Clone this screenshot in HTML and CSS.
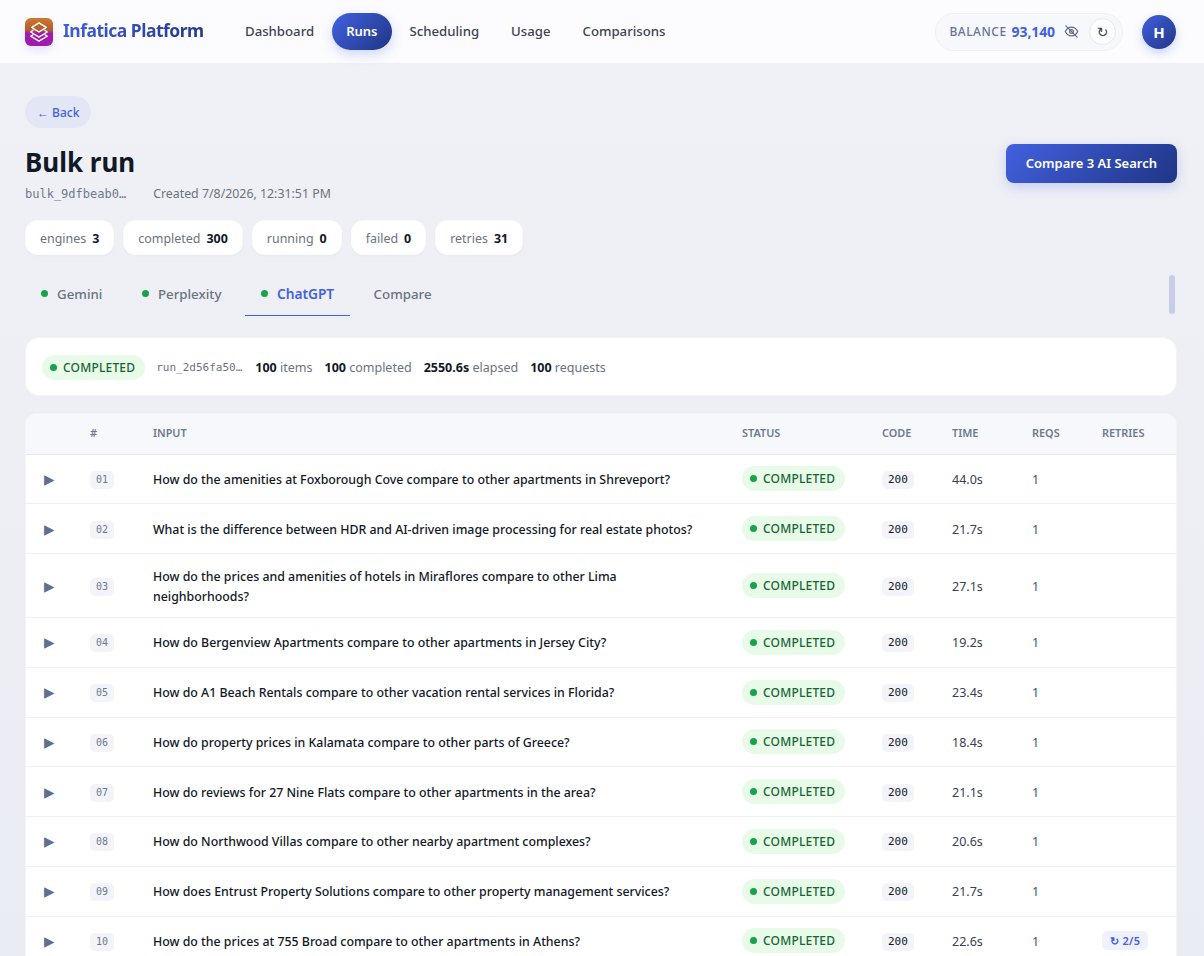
FILE: index.html
```html
<!DOCTYPE html>
<html lang="en">

<head>
    <meta charset="UTF-8">
    <meta name="viewport" content="width=device-width, initial-scale=1.0">
    <title>Infatica Platform - Bulk run</title>
    <link rel="stylesheet" href="styles.css">
</head>

<body>
    <header class="topbar">
        <div class="brand">
            <div class="brand-logo">
                <svg width="22" height="22" viewBox="0 0 24 24" fill="none" stroke="#fff" stroke-width="1.5" stroke-linejoin="round" stroke-linecap="round">
                    <path d="M12 2 20 7 12 12 4 7Z" />
                    <path d="M5.5 10 3 12 12 17.5 21 12 18.5 10" />
                    <path d="M5.5 15 3 16.5 12 22 21 16.5 18.5 15" />
                </svg>
            </div>
            <span class="brand-name">Infatica Platform</span>
        </div>
        <nav class="nav">
            <a class="nav-link">Dashboard</a>
            <a class="nav-link active">Runs</a>
            <a class="nav-link">Scheduling</a>
            <a class="nav-link">Usage</a>
            <a class="nav-link">Comparisons</a>
        </nav>
        <div class="balance">
            <span class="balance-label">BALANCE</span>
            <span class="balance-value">93,140</span>
            <svg class="eye-off" width="15" height="15" viewBox="0 0 24 24" fill="none" stroke="#5f6b85" stroke-width="2" stroke-linecap="round" stroke-linejoin="round">
                <path d="M2 12s3.6-7 10-7 10 7 10 7-3.6 7-10 7-10-7-10-7Z" />
                <circle cx="12" cy="12" r="3" />
                <path d="M3 3l18 18" />
            </svg>
            <button class="refresh">↻</button>
        </div>
        <div class="avatar">H</div>
    </header>

    <main class="page">
        <button class="back">← Back</button>

        <div class="title-row">
            <div>
                <h1>Bulk run</h1>
                <div class="meta">
                    <span class="mono-id">bulk_9dfbeab0…</span>
                    <span>Created 7/8/2026, 12:31:51 PM</span>
                </div>
            </div>
            <button class="compare-btn">Compare 3 AI Search</button>
        </div>

        <div class="stats">
            <div class="stat">engines <b>3</b></div>
            <div class="stat">completed <b>300</b></div>
            <div class="stat">running <b>0</b></div>
            <div class="stat">failed <b>0</b></div>
            <div class="stat">retries <b>31</b></div>
        </div>

        <div class="tabs-row">
            <div class="tabs">
                <div class="tab"><i class="dot"></i>Gemini</div>
                <div class="tab"><i class="dot"></i>Perplexity</div>
                <div class="tab active"><i class="dot"></i>ChatGPT</div>
                <div class="tab">Compare</div>
            </div>
            <div class="tabs-scroll"></div>
        </div>

        <div class="summary">
            <span class="pill"><i class="dot"></i>COMPLETED</span>
            <span class="mono-id run-id">run_2d56fa50…</span>
            <span class="sum-item"><b>100</b> items</span>
            <span class="sum-item"><b>100</b> completed</span>
            <span class="sum-item"><b>2550.6s</b> elapsed</span>
            <span class="sum-item"><b>100</b> requests</span>
        </div>

        <div class="table-card">
            <table>
                <colgroup>
                    <col class="c-exp">
                    <col class="c-num">
                    <col>
                    <col class="c-status">
                    <col class="c-code">
                    <col class="c-time">
                    <col class="c-reqs">
                    <col class="c-retries">
                </colgroup>
                <thead>
                    <tr>
                        <th></th>
                        <th>#</th>
                        <th>INPUT</th>
                        <th>STATUS</th>
                        <th>CODE</th>
                        <th>TIME</th>
                        <th>REQS</th>
                        <th>RETRIES</th>
                    </tr>
                </thead>
                <tbody>
                    <tr>
                        <td class="exp">▶</td>
                        <td><span class="num">01</span></td>
                        <td class="input">How do the amenities at Foxborough Cove compare to other apartments in Shreveport?</td>
                        <td><span class="pill"><i class="dot"></i>COMPLETED</span></td>
                        <td><span class="code">200</span></td>
                        <td class="time">44.0s</td>
                        <td class="reqs">1</td>
                        <td></td>
                    </tr>
                    <tr>
                        <td class="exp">▶</td>
                        <td><span class="num">02</span></td>
                        <td class="input">What is the difference between HDR and AI-driven image processing for real estate photos?</td>
                        <td><span class="pill"><i class="dot"></i>COMPLETED</span></td>
                        <td><span class="code">200</span></td>
                        <td class="time">21.7s</td>
                        <td class="reqs">1</td>
                        <td></td>
                    </tr>
                    <tr>
                        <td class="exp">▶</td>
                        <td><span class="num">03</span></td>
                        <td class="input">How do the prices and amenities of hotels in Miraflores compare to other Lima neighborhoods?</td>
                        <td><span class="pill"><i class="dot"></i>COMPLETED</span></td>
                        <td><span class="code">200</span></td>
                        <td class="time">27.1s</td>
                        <td class="reqs">1</td>
                        <td></td>
                    </tr>
                    <tr>
                        <td class="exp">▶</td>
                        <td><span class="num">04</span></td>
                        <td class="input">How do Bergenview Apartments compare to other apartments in Jersey City?</td>
                        <td><span class="pill"><i class="dot"></i>COMPLETED</span></td>
                        <td><span class="code">200</span></td>
                        <td class="time">19.2s</td>
                        <td class="reqs">1</td>
                        <td></td>
                    </tr>
                    <tr>
                        <td class="exp">▶</td>
                        <td><span class="num">05</span></td>
                        <td class="input">How do A1 Beach Rentals compare to other vacation rental services in Florida?</td>
                        <td><span class="pill"><i class="dot"></i>COMPLETED</span></td>
                        <td><span class="code">200</span></td>
                        <td class="time">23.4s</td>
                        <td class="reqs">1</td>
                        <td></td>
                    </tr>
                    <tr>
                        <td class="exp">▶</td>
                        <td><span class="num">06</span></td>
                        <td class="input">How do property prices in Kalamata compare to other parts of Greece?</td>
                        <td><span class="pill"><i class="dot"></i>COMPLETED</span></td>
                        <td><span class="code">200</span></td>
                        <td class="time">18.4s</td>
                        <td class="reqs">1</td>
                        <td></td>
                    </tr>
                    <tr>
                        <td class="exp">▶</td>
                        <td><span class="num">07</span></td>
                        <td class="input">How do reviews for 27 Nine Flats compare to other apartments in the area?</td>
                        <td><span class="pill"><i class="dot"></i>COMPLETED</span></td>
                        <td><span class="code">200</span></td>
                        <td class="time">21.1s</td>
                        <td class="reqs">1</td>
                        <td></td>
                    </tr>
                    <tr>
                        <td class="exp">▶</td>
                        <td><span class="num">08</span></td>
                        <td class="input">How do Northwood Villas compare to other nearby apartment complexes?</td>
                        <td><span class="pill"><i class="dot"></i>COMPLETED</span></td>
                        <td><span class="code">200</span></td>
                        <td class="time">20.6s</td>
                        <td class="reqs">1</td>
                        <td></td>
                    </tr>
                    <tr>
                        <td class="exp">▶</td>
                        <td><span class="num">09</span></td>
                        <td class="input">How does Entrust Property Solutions compare to other property management services?</td>
                        <td><span class="pill"><i class="dot"></i>COMPLETED</span></td>
                        <td><span class="code">200</span></td>
                        <td class="time">21.7s</td>
                        <td class="reqs">1</td>
                        <td></td>
                    </tr>
                    <tr>
                        <td class="exp">▶</td>
                        <td><span class="num">10</span></td>
                        <td class="input">How do the prices at 755 Broad compare to other apartments in Athens?</td>
                        <td><span class="pill"><i class="dot"></i>COMPLETED</span></td>
                        <td><span class="code">200</span></td>
                        <td class="time">22.6s</td>
                        <td class="reqs">1</td>
                        <td><span class="retry">↻ 2/5</span></td>
                    </tr>
                </tbody>
            </table>
        </div>
    </main>
</body>

</html>
```

FILE: styles.css
```css
* {
    box-sizing: border-box;
}

html,
body {
    height: 956px;
    overflow: hidden;
}

body {
    margin: 0;
    font-family: "Noto Sans", "Open Sans", sans-serif;
    font-size: 13px;
    background: linear-gradient(180deg, #f0f1f6 0%, #eaecf3 100%);
    color: #111827;
}

.topbar {
    display: flex;
    align-items: center;
    height: 63px;
    padding: 0 28px 0 25px;
    background-color: #fcfcff;
}

.brand {
    display: flex;
    align-items: center;
    gap: 10px;
    width: 206px;
}

.brand-logo {
    display: flex;
    align-items: center;
    justify-content: center;
    width: 28px;
    height: 28px;
    border-radius: 6px;
    background: linear-gradient(180deg, #cc7a2a 0%, #ae5a2f 45%, #a01aad 55%, #a01aad 100%);
    box-shadow: 0 4px 10px rgba(67, 90, 220, 0.15);
}

.brand-name {
    padding-bottom: 3px;
    font-size: 17.5px;
    font-weight: 700;
    letter-spacing: -0.5px;
    background: linear-gradient(135deg, #4361e0, #1f3585);
    -webkit-background-clip: text;
    background-clip: text;
    color: transparent;
}

.nav {
    display: flex;
    align-items: center;
    gap: 4px;
}

.nav-link {
    padding: 9px 14px;
    border-radius: 19px;
    font-size: 13.2px;
    font-weight: 500;
    line-height: 19px;
    color: #3f4254;
}

.nav-link.active {
    font-size: 13px;
    color: #fff;
    font-weight: 600;
    background: linear-gradient(135deg, #4361e0, #1f3585);
    box-shadow: 0 4px 12px rgba(67, 97, 224, 0.25);
}

.balance {
    display: flex;
    align-items: center;
    height: 38px;
    margin-left: auto;
    padding: 0 6px 0 13px;
    border: 1px solid #eef0f6;
    border-radius: 19px;
    background-color: #f7f8fc;
}

.balance-label {
    font-size: 12px;
    font-weight: 500;
    letter-spacing: 0.5px;
    color: #66739c;
}

.balance-value {
    margin-left: 5px;
    font-size: 14px;
    font-weight: 700;
    letter-spacing: -0.1px;
    color: #4361e0;
}

.eye-off {
    margin-left: 9px;
}

.refresh {
    width: 27px;
    height: 27px;
    margin-left: 10px;
    padding: 0;
    border: 1px solid #e6e8f0;
    border-radius: 50%;
    background-color: #fff;
    font-family: "DejaVu Sans", sans-serif;
    font-size: 14px;
    color: #3f4254;
}

.avatar {
    display: flex;
    align-items: center;
    justify-content: center;
    width: 34px;
    height: 34px;
    margin-left: 19px;
    border-radius: 50%;
    font-size: 15px;
    font-weight: 700;
    color: #fff;
    background: linear-gradient(135deg, #4361e0, #1f3585);
    box-shadow: 0 4px 10px rgba(67, 97, 224, 0.25);
}

.page {
    padding: 33px 27px 0 25px;
}

.back {
    display: block;
    height: 32px;
    padding: 0 12px;
    border: none;
    border-radius: 16px;
    background-color: #e3e7f5;
    font-family: inherit;
    font-size: 12px;
    font-weight: 500;
    color: #3f62e0;
}

.title-row {
    display: flex;
    align-items: flex-start;
    justify-content: space-between;
    margin-top: 16px;
}

h1 {
    margin: 0;
    font-size: 26px;
    font-weight: 700;
    line-height: 36px;
    color: #111827;
}

.meta {
    display: flex;
    gap: 27px;
    margin-top: 5px;
    font-size: 12.35px;
    line-height: 18px;
    color: #6b7280;
}

.mono-id {
    font-family: "DejaVu Sans Mono", monospace;
    font-size: 12px;
    color: #6b7a90;
}

.compare-btn {
    height: 39px;
    padding: 0 20px 2px;
    border: none;
    border-radius: 8px;
    background: linear-gradient(135deg, #4361e0, #1f3585);
    box-shadow: 0 4px 12px rgba(67, 97, 224, 0.25);
    font-family: inherit;
    font-size: 13px;
    font-weight: 600;
    color: #fff;
}

.stats {
    display: flex;
    gap: 9px;
    margin-top: 17px;
}

.stat {
    display: flex;
    align-items: center;
    gap: 6px;
    height: 35px;
    padding: 1px 14px 0;
    border: 1px solid #fafbfd;
    border-radius: 12px;
    background-color: #fff;
    box-shadow: 0 1px 2px rgba(17, 24, 39, 0.03);
    font-size: 12.45px;
    color: #6b7280;
}

.stat b {
    font-weight: 700;
    color: #111827;
}

.tabs-row {
    display: flex;
    align-items: center;
    justify-content: space-between;
    margin-top: 17px;
    padding-right: 2px;
}

.tabs {
    display: flex;
    gap: 7.5px;
}

.tab {
    display: flex;
    align-items: center;
    height: 44px;
    padding: 0 16px;
    border-bottom: 1px solid transparent;
    font-size: 13.3px;
    font-weight: 500;
    color: #6b7280;
}

.tab .dot {
    margin-right: 9px;
}

.tab.active {
    border-bottom-color: #4361e0;
    font-size: 13.7px;
    font-weight: 600;
    color: #4361e0;
}

.dot {
    display: inline-block;
    flex: none;
    width: 7px;
    height: 7px;
    border-radius: 50%;
    background-color: #16a34a;
}

.tabs-scroll {
    width: 6px;
    height: 39px;
    border-radius: 3px;
    background-color: #c8cde8;
}

.summary {
    display: flex;
    align-items: center;
    height: 59px;
    margin-top: 21px;
    padding: 1px 16px 0;
    border: 1px solid #f3f4f9;
    border-radius: 14px;
    background-color: #fff;
    font-size: 12.5px;
    color: #6b7280;
}

.summary .mono-id {
    margin: 0 1px 0 11px;
    font-size: 11px;
    color: #6b7280;
}

.sum-item {
    margin-left: 12px;
}

.sum-item b {
    font-weight: 700;
    color: #111827;
}

.pill {
    display: inline-flex;
    align-items: center;
    gap: 6px;
    height: 25px;
    padding: 1px 10px 0 8px;
    border-radius: 13px;
    background-color: #e8fbe9;
    font-size: 12px;
    font-weight: 500;
    letter-spacing: 0.2px;
    color: #166534;
}

.pill .dot {
    margin-top: -1px;
}

.table-card {
    margin-top: 17px;
    border: 1px solid #f3f4f9;
    border-radius: 12px;
    background-color: #fff;
    overflow: hidden;
}

table {
    width: 100%;
    table-layout: fixed;
    border-collapse: collapse;
}

.c-exp {
    width: 52px;
}

.c-num {
    width: 63px;
}

.c-status {
    width: 140px;
}

.c-code {
    width: 70px;
}

.c-time {
    width: 80px;
}

.c-reqs {
    width: 70px;
}

.c-retries {
    width: 86px;
}

th {
    height: 40px;
    padding: 0 12px 2px;
    border-bottom: 1px solid #e4e8f2;
    background-color: #f7f8fc;
    font-size: 10.9px;
    font-weight: 600;
    text-align: left;
    color: #6b7a90;
}

td {
    height: 49.75px;
    padding: 11.5px 12px;
    border-bottom: 1px solid #eef0f5;
    font-size: 12.5px;
    line-height: 20px;
}

.exp {
    padding-left: 18px;
    font-family: "DejaVu Sans", sans-serif;
    font-size: 13.5px;
    color: #5f6f8f;
}

.num {
    display: inline-block;
    padding: 0 6px;
    border-radius: 5px;
    background-color: #f3f4f9;
    font-family: "DejaVu Sans Mono", monospace;
    font-size: 10px;
    line-height: 18px;
    color: #6b7a90;
}

td.input {
    padding: 12.5px 30px 10.5px 12px;
    font-size: 12.35px;
    font-weight: 500;
    color: #111827;
}

.code {
    display: inline-block;
    padding: 0 6px;
    border-radius: 5px;
    background-color: #f3f4f9;
    font-family: "DejaVu Sans Mono", monospace;
    font-size: 11px;
    line-height: 18px;
    color: #111827;
}

td.time {
    padding: 12.5px 12px 10.5px;
    color: #374151;
}

td.reqs {
    padding: 12.5px 12px 10.5px;
    color: #475569;
}

.retry {
    display: inline-block;
    padding: 0 8px;
    border-radius: 5px;
    background-color: #eff2fe;
    font-size: 11px;
    font-weight: 600;
    letter-spacing: 0.3px;
    line-height: 19px;
    color: #4361e0;
}
```
